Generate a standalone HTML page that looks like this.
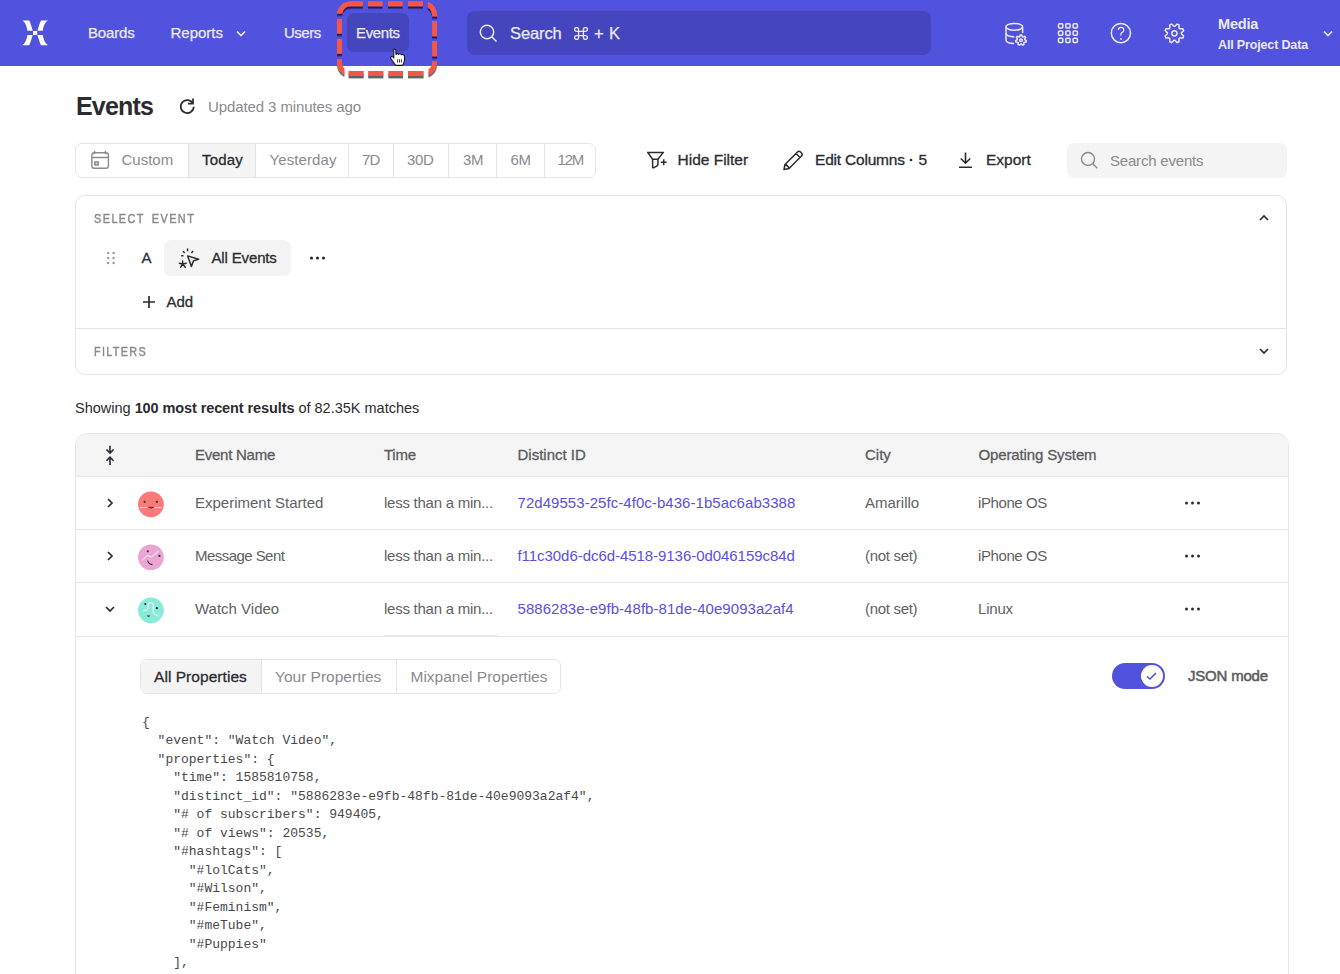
<!DOCTYPE html>
<html><head><meta charset="utf-8">
<style>
*{box-sizing:border-box;margin:0;padding:0}
html,body{width:1340px;height:974px;overflow:hidden;background:#fff;font-family:"Liberation Sans",sans-serif;color:#2B2B30}
.a{position:absolute;white-space:nowrap}
.ico{position:absolute}
.m{-webkit-text-stroke:0.3px currentColor}
#hdr{position:absolute;left:0;top:0;width:1340px;height:66px;background:#5152DE}
.nav{color:#ECEAF8;font-size:15px;line-height:18px;top:24px;-webkit-text-stroke:0.25px #ECEAF8}
.dr{top:151px;font-size:15px;line-height:17px;color:#8A8A8F}
.act{top:151px;font-size:15.5px;line-height:17px;color:#2B2B30}
.lbl{font-size:12.5px;line-height:14px;letter-spacing:1.5px;color:#8A8A8F;-webkit-text-stroke:0.45px #8A8A8F;transform:scaleX(0.87);transform-origin:0 0}
.th{top:446px;font-size:15px;line-height:17px;color:#5B5B60}
.td{font-size:15px;line-height:17px;color:#5F5F64}
.lk{color:#5A4FE0}
.tab{top:667.5px;font-size:15.5px;line-height:17px;color:#8A8A8F}
.json{white-space:pre;font-family:"Liberation Mono",monospace;font-size:13px;line-height:18.5px;color:#48484D}
</style></head><body>
<div id="hdr">
  <svg class="ico" style="left:18px;top:16px" width="34" height="34" viewBox="0 0 34 34" fill="#fff">
    <g id="petal"><path d="M4.2 4.6 H11.2 C12.6 7.5 13.8 11.5 14.7 14.7 H9.4 C8.8 11 7.6 6.4 4.2 4.6 Z"/></g>
    <use href="#petal" transform="matrix(-1 0 0 1 34.2 0)"/>
    <use href="#petal" transform="matrix(1 0 0 -1 0 33.8)"/>
    <use href="#petal" transform="matrix(-1 0 0 -1 34.2 33.8)"/>
    <rect x="15" y="14.9" width="4.2" height="4"/>
  </svg>
  <div class="a nav" style="left:88px;letter-spacing:-0.15px">Boards</div>
  <div class="a nav" style="left:170.5px">Reports</div>
  <svg class="ico" style="left:235px;top:29px" width="12" height="9" viewBox="0 0 12 9"><path d="M2 2.5 L6 6.5 L10 2.5" fill="none" stroke="#ECEAF8" stroke-width="1.6"/></svg>
  <div class="a nav" style="left:284px;letter-spacing:-0.5px">Users</div>
  <div class="ico" style="left:347px;top:13px;width:62px;height:39px;background:#4546BD;border-radius:7px"></div>
  <div class="a nav" style="left:356px;letter-spacing:-0.35px">Events</div>
  <!-- search -->
  <div class="ico" style="left:467px;top:11px;width:464px;height:44px;background:#4546BD;border-radius:8px"></div>
  <svg class="ico" style="left:477px;top:22px" width="24" height="24" viewBox="0 0 24 24"><circle cx="10" cy="10" r="6.7" fill="none" stroke="#ECEAF8" stroke-width="1.5"/><path d="M14.8 14.8 L19.5 19.5" stroke="#ECEAF8" stroke-width="1.6"/></svg>
  <div class="a nav" style="left:510px;top:24px;font-size:16.5px;line-height:19px;letter-spacing:-0.1px">Search</div>
  <svg class="ico" style="left:573.5px;top:27px" width="14" height="13" viewBox="0 0 14 14" preserveAspectRatio="none"><path d="M4.6 4.6 V2.6 A2 2 0 1 0 2.6 4.6 H11.4 A2 2 0 1 0 9.4 2.6 V11.4 A2 2 0 1 0 11.4 9.4 H2.6 A2 2 0 1 0 4.6 11.4 Z" fill="none" stroke="#ECEAF8" stroke-width="1.35"/></svg>
  <div class="a nav" style="left:594px;top:24px;font-size:16.5px;line-height:19px">+</div>
  <div class="a nav" style="left:609px;top:24px;font-size:16.5px;line-height:19px">K</div>
  <!-- right icons -->
  <svg class="ico" style="left:0;top:0" width="1340" height="66" viewBox="0 0 1340 66" fill="none" stroke="#ECEAF8" stroke-width="1.5">
    <ellipse cx="1014.3" cy="26.8" rx="8.3" ry="3.4"/>
    <path d="M1006 26.8 V40 Q1006 43.3 1014 43.6"/>
    <path d="M1022.6 26.8 V33"/>
    <path d="M1006 33.6 Q1007 36.6 1014.3 37"/>
    <path d="M1019.60 36.67 L1020.34 34.94 L1021.66 34.94 L1022.40 36.67 L1022.89 36.90 L1024.70 36.40 L1025.53 37.44 L1024.63 39.09 L1024.76 39.62 L1026.27 40.72 L1025.98 42.02 L1024.13 42.35 L1023.79 42.78 L1023.88 44.65 L1022.68 45.23 L1021.27 43.99 L1020.73 43.99 L1019.32 45.23 L1018.12 44.65 L1018.21 42.78 L1017.87 42.35 L1016.02 42.02 L1015.73 40.72 L1017.24 39.62 L1017.37 39.09 L1016.47 37.44 L1017.30 36.40 L1019.11 36.90 Z" fill="#5152DE"/>
    <circle cx="1021" cy="40.2" r="1.3"/>
    <rect x="1058.5" y="23.7" width="4.3" height="4.3" rx="1"/><rect x="1065.8" y="23.7" width="4.3" height="4.3" rx="1"/><rect x="1073.1" y="23.7" width="4.3" height="4.3" rx="1"/>
    <rect x="1058.5" y="31" width="4.3" height="4.3" rx="1"/><rect x="1065.8" y="31" width="4.3" height="4.3" rx="1"/><rect x="1073.1" y="31" width="4.3" height="4.3" rx="1"/>
    <rect x="1058.5" y="38.3" width="4.3" height="4.3" rx="1"/><rect x="1065.8" y="38.3" width="4.3" height="4.3" rx="1"/><rect x="1073.1" y="38.3" width="4.3" height="4.3" rx="1"/>
    <circle cx="1120.9" cy="33.1" r="9.6"/>
    <path d="M1118.3 30 Q1118.3 27.3 1121 27.3 Q1123.8 27.3 1123.8 30 Q1123.8 31.8 1121.8 32.6 Q1120.9 33 1120.9 34.5 V35.5" stroke-width="1.2"/>
    <path d="M1181.39 33.74 L1183.62 35.98 L1182.81 37.92 L1179.65 37.93 L1179.03 38.55 L1179.02 41.71 L1177.08 42.52 L1174.84 40.29 L1173.96 40.29 L1171.72 42.52 L1169.78 41.71 L1169.77 38.55 L1169.15 37.93 L1165.99 37.92 L1165.18 35.98 L1167.41 33.74 L1167.41 32.86 L1165.18 30.62 L1165.99 28.68 L1169.15 28.67 L1169.77 28.05 L1169.78 24.89 L1171.72 24.08 L1173.96 26.31 L1174.84 26.31 L1177.08 24.08 L1179.02 24.89 L1179.03 28.05 L1179.65 28.67 L1182.81 28.68 L1183.62 30.62 L1181.39 32.86 Z"/>
    <circle cx="1174.4" cy="33.3" r="2.6"/>
  </svg>
  <svg class="ico" style="left:1120px;top:37.5px" width="2" height="2"><circle cx="1" cy="1" r="0.9" fill="#ECEAF8"/></svg>
  <div class="a m" style="left:1218px;top:16px;color:#ECEAF8;font-size:14.5px;line-height:17px;font-weight:bold;letter-spacing:-0.2px;-webkit-text-stroke:0">Media</div>
  <div class="a" style="left:1218px;top:37.5px;color:#ECEAF8;font-size:12.5px;line-height:15px;font-weight:bold;letter-spacing:-0.15px">All Project Data</div>
  <svg class="ico" style="left:1322px;top:29px" width="12" height="9" viewBox="0 0 12 9"><path d="M2 2.5 L6 6.5 L10 2.5" fill="none" stroke="#ECEAF8" stroke-width="1.6"/></svg>
</div>

<!-- page title -->
<div class="a" style="left:76px;top:92px;font-size:25px;line-height:29px;font-weight:bold;color:#2B2B30;letter-spacing:-0.8px">Events</div>
<svg class="ico" style="left:177px;top:97px" width="20" height="20" viewBox="0 0 20 20" fill="none" stroke="#2B2B30" stroke-width="1.7"><path d="M16.75 9.8 A6.5 6.5 0 1 1 16 6.5"/><path d="M16 1.6 V6.6 H11"/></svg>
<div class="a" style="left:208px;top:98px;font-size:15px;line-height:17px;color:#8A8A8F;letter-spacing:-0.1px">Updated 3 minutes ago</div>

<!-- date range -->
<div class="ico" style="left:75px;top:143px;width:521px;height:35px;border:1px solid #E5E5E5;border-radius:7px"></div>
<div class="ico" style="left:188px;top:144px;width:68px;height:33px;background:#F4F4F4;border-left:1px solid #E5E5E5;border-right:1px solid #E5E5E5"></div>
<div class="ico" style="left:348px;top:144px;width:1px;height:33px;background:#E5E5E5"></div>
<div class="ico" style="left:393px;top:144px;width:1px;height:33px;background:#E5E5E5"></div>
<div class="ico" style="left:448px;top:144px;width:1px;height:33px;background:#E5E5E5"></div>
<div class="ico" style="left:496px;top:144px;width:1px;height:33px;background:#E5E5E5"></div>
<div class="ico" style="left:544px;top:144px;width:1px;height:33px;background:#E5E5E5"></div>
<svg class="ico" style="left:89px;top:150px" width="21" height="21" viewBox="0 0 21 21" fill="none" stroke="#8A8A8F" stroke-width="1.4">
  <rect x="2.9" y="2.8" width="16.5" height="15.4" rx="2.2"/><path d="M2.9 7.5 H19.4 M5.6 0.8 V4.3 M16.4 0.8 V4.3"/><rect x="6" y="12" width="3.1" height="2.9" stroke-width="1.6"/>
</svg>
<div class="a dr" style="left:121.5px">Custom</div>
<div class="a dr m" style="left:202px;font-size:15px;color:#2B2B30;letter-spacing:0.2px">Today</div>
<div class="a dr" style="left:269.5px;letter-spacing:0.1px">Yesterday</div>
<div class="a dr" style="left:362px;letter-spacing:-0.8px">7D</div>
<div class="a dr" style="left:407px;letter-spacing:-0.3px">30D</div>
<div class="a dr" style="left:463px;letter-spacing:-0.3px">3M</div>
<div class="a dr" style="left:510.5px;letter-spacing:-0.3px">6M</div>
<div class="a dr" style="left:557.5px;letter-spacing:-1.2px">12M</div>

<!-- actions -->
<svg class="ico" style="left:645px;top:150px" width="24" height="20" viewBox="0 0 24 20" fill="none" stroke="#2B2B30" stroke-width="1.5" stroke-linejoin="round">
  <path d="M2.7 2.4 H18.4 L12.9 9.2 H7.6 Z"/><path d="M7.6 9.2 V17.2 Q7.9 18.2 9 17.6 L11.6 16.2 Q12.9 15.6 12.9 14.6 V9.2"/><path d="M18.7 9.3 V15.2 M15.8 12.25 H21.6"/>
</svg>
<div class="a act m" style="left:677.5px">Hide Filter</div>
<svg class="ico" style="left:781px;top:149px" width="24" height="22" viewBox="0 0 24 22" fill="none" stroke="#2B2B30" stroke-width="1.5" stroke-linejoin="round">
  <path d="M3 20.5 L4 15.5 L16.5 3 Q18 1.5 19.5 3 L20.5 4 Q22 5.5 20.5 7 L8 19.5 Z M15 4.5 L19 8.5 M4.3 14.9 L8.1 18.7"/>
</svg>
<div class="a act m" style="left:815px;letter-spacing:-0.2px">Edit Columns</div><svg class="ico" style="left:909px;top:158px" width="4" height="4"><circle cx="2" cy="2" r="1.35" fill="#2B2B30"/></svg><div class="a act m" style="left:918.5px">5</div>
<svg class="ico" style="left:956px;top:150px" width="20" height="20" viewBox="0 0 20 20" fill="none" stroke="#2B2B30" stroke-width="1.6">
  <path d="M9.5 2.5 V13 M4.8 8.5 L9.5 13.2 L14.2 8.5 M3 17.3 H16"/>
</svg>
<div class="a act m" style="left:986px">Export</div>

<!-- search events -->
<div class="ico" style="left:1067px;top:143px;width:220px;height:35px;background:#F4F4F4;border-radius:7px"></div>
<svg class="ico" style="left:1079px;top:150px" width="22" height="22" viewBox="0 0 22 22" fill="none" stroke="#8A8A8F" stroke-width="1.4"><circle cx="9" cy="9" r="6.5"/><path d="M13.8 13.8 L18.3 18.3"/></svg>
<div class="a" style="left:1110px;top:152px;font-size:15px;line-height:17px;color:#8A8A8F;letter-spacing:-0.2px">Search events</div>

<!-- select event card -->
<div class="ico" style="left:75px;top:195px;width:1212px;height:180px;border:1px solid #E5E5E5;border-radius:10px"></div>
<div class="ico" style="left:76px;top:328px;width:1210px;height:1px;background:#E5E5E5"></div>
<div class="a lbl" style="left:94px;top:212px;word-spacing:3px;letter-spacing:1.65px">SELECT EVENT</div>
<svg class="ico" style="left:1258px;top:213px" width="12" height="9" viewBox="0 0 12 9"><path d="M2 7 L6 3 L10 7" fill="none" stroke="#2B2B30" stroke-width="1.7"/></svg>
<svg class="ico" style="left:106px;top:251px" width="10" height="14" viewBox="0 0 10 14" fill="#9C9CA0">
  <circle cx="2.2" cy="2" r="1.25"/><circle cx="7.6" cy="2" r="1.25"/><circle cx="2.2" cy="7" r="1.25"/><circle cx="7.6" cy="7" r="1.25"/><circle cx="2.2" cy="12" r="1.25"/><circle cx="7.6" cy="12" r="1.25"/>
</svg>
<div class="a m" style="left:141.5px;top:249px;font-size:15px;line-height:17px;color:#2B2B30">A</div>
<div class="ico" style="left:164px;top:240px;width:127px;height:36px;background:#F4F4F4;border-radius:7px"></div>
<svg class="ico" style="left:177px;top:246px" width="24" height="24" viewBox="0 0 24 24" fill="none" stroke="#2B2B30" stroke-width="1.5" stroke-linejoin="round">
  <path d="M10.7 9.9 L21.6 13.3 L16.4 14.9 L14.4 20.4 Z"/><path d="M10.55 2.6 V5.2 M5.9 5.3 L7.8 6.9 M16.1 4.9 L14.4 6.9 M4.2 9.8 H6.5"/>
  <path d="M5.6 15 V17.9 M2.4 17.3 L5.6 17.9 L9.2 17.2 M3.7 21.2 L5.6 17.9 L8.3 21.2" stroke-width="1.5" stroke-linecap="round"/>
</svg>
<div class="a m" style="left:211.5px;top:249px;font-size:15px;line-height:17px;color:#2B2B30;letter-spacing:-0.15px">All Events</div>
<svg class="ico" style="left:309px;top:255px" width="17" height="6" viewBox="0 0 17 6" fill="#2B2B30"><circle cx="2.5" cy="3" r="1.6"/><circle cx="8.5" cy="3" r="1.6"/><circle cx="14.5" cy="3" r="1.6"/></svg>
<svg class="ico" style="left:142px;top:295px" width="14" height="14" viewBox="0 0 14 14"><path d="M7 1 V13 M1 7 H13" stroke="#2B2B30" stroke-width="1.7"/></svg>
<div class="a m" style="left:166.5px;top:293px;font-size:15px;line-height:17px;color:#2B2B30">Add</div>
<div class="a lbl" style="left:94px;top:344.5px">FILTERS</div>
<svg class="ico" style="left:1258px;top:347px" width="12" height="9" viewBox="0 0 12 9"><path d="M2 2 L6 6 L10 2" fill="none" stroke="#2B2B30" stroke-width="1.7"/></svg>

<!-- showing -->
<div class="a" style="left:75px;top:400px;font-size:14.5px;line-height:16px;color:#2B2B30">Showing <b style="letter-spacing:-0.1px">100 most recent results</b> of 82.35K matches</div>

<!-- table -->
<div class="ico" style="left:75px;top:433px;width:1214px;height:600px;border:1px solid #E7E7E7;border-radius:12px;overflow:hidden">
  <div class="ico" style="left:0;top:0;width:1212px;height:42px;background:#F5F5F5"></div>
  <div class="ico" style="left:0;top:42px;width:1212px;height:1px;background:#E7E7E7"></div>
  <div class="ico" style="left:0;top:95px;width:1212px;height:1px;background:#E7E7E7"></div>
  <div class="ico" style="left:0;top:148px;width:1212px;height:1px;background:#E7E7E7"></div>
  <div class="ico" style="left:0;top:202px;width:1212px;height:1px;background:#E7E7E7"></div>
</div>
<svg class="ico" style="left:104px;top:444px" width="12" height="22" viewBox="0 0 12 22" fill="none" stroke="#2B2B30" stroke-width="1.6">
  <path d="M6 1.8 V9 M2.5 5.5 L6 9 L9.5 5.5 M6 21 V13.2 M2.5 16.7 L6 13.2 L9.5 16.7"/>
</svg>
<div class="a th m" style="left:195px;letter-spacing:-0.25px">Event Name</div>
<div class="a th m" style="left:384px;letter-spacing:-0.25px">Time</div>
<div class="a th m" style="left:517.5px">Distinct ID</div>
<div class="a th m" style="left:865px">City</div>
<div class="a th m" style="left:978.5px;letter-spacing:-0.13px">Operating System</div>

<svg class="ico" style="left:104px;top:497px" width="12" height="12" viewBox="0 0 12 12"><path d="M4 2 L8 6 L4 10" fill="none" stroke="#2B2B30" stroke-width="1.7"/></svg>
<svg class="ico" style="left:104px;top:550px" width="12" height="12" viewBox="0 0 12 12"><path d="M4 2 L8 6 L4 10" fill="none" stroke="#2B2B30" stroke-width="1.7"/></svg>
<svg class="ico" style="left:104px;top:603px" width="12" height="12" viewBox="0 0 12 12"><path d="M2 4 L6 8 L10 4" fill="none" stroke="#2B2B30" stroke-width="1.7"/></svg>

<svg class="ico" style="left:137px;top:490px" width="28" height="28" viewBox="0 0 28 28">
  <circle cx="13.9" cy="14.3" r="12.9" fill="#FA7A7A"/>
  <circle cx="7.6" cy="11.8" r="1.15" fill="#2A3A3A"/><circle cx="19.9" cy="11.8" r="1.15" fill="#2A3A3A"/>
  <path d="M11.6 17.3 H16.6 Q14.1 19.2 11.6 17.3 Z" fill="#2A3A3A" stroke="#2A3A3A" stroke-width="0.6"/>
  <path d="M3.1 17.6 H9.9 M17.9 17.6 H24.9" stroke="#fff" stroke-width="1" stroke-dasharray="1.6 0.5"/>
</svg>
<svg class="ico" style="left:137px;top:543px" width="28" height="28" viewBox="0 0 28 28">
  <circle cx="13.9" cy="14.3" r="12.9" fill="#EBA5D3"/>
  <circle cx="10.8" cy="8.3" r="1.1" fill="#2A3A3A"/><circle cx="22.4" cy="12.9" r="1.1" fill="#2A3A3A"/>
  <path d="M5.4 17.2 L10.3 12.4 L14.5 14.1 L21.4 8.2" fill="none" stroke="#fff" stroke-width="1"/>
  <path d="M10.6 17.6 Q11.5 21 15.5 21.6" fill="none" stroke="#2A3A3A" stroke-width="1.1"/>
</svg>
<svg class="ico" style="left:137px;top:596px" width="28" height="28" viewBox="0 0 28 28">
  <circle cx="13.9" cy="14.3" r="12.9" fill="#8AEBD9"/>
  <circle cx="8.3" cy="8" r="1.1" fill="#2A2A2A"/><circle cx="19.9" cy="12.2" r="1.1" fill="#2A2A2A"/>
  <path d="M6.25 14.45 H9.2 Q10.6 14 11.3 11.7 V8 Q11.6 6.6 13.75 6.6 Q16.2 6.6 16.2 8 V16.5 Q17 19.2 21.4 20" fill="none" stroke="#fff" stroke-width="1"/>
  <path d="M9.6 19.4 H13.4 Q11.5 22.2 9.6 19.4 Z" fill="#2A2A2A"/>
</svg>

<div class="a td" style="left:195px;top:494px">Experiment Started</div>
<div class="a td" style="left:384px;top:494px;letter-spacing:-0.25px">less than a min...</div>
<div class="a td lk" style="left:517.5px;top:494px;letter-spacing:0.05px">72d49553-25fc-4f0c-b436-1b5ac6ab3388</div>
<div class="a td" style="left:865px;top:494px">Amarillo</div>
<div class="a td" style="left:978px;top:494px;letter-spacing:-0.4px">iPhone OS</div>
<svg class="ico" style="left:1184px;top:500px" width="17" height="6" viewBox="0 0 17 6" fill="#2B2B30"><circle cx="2.5" cy="3" r="1.5"/><circle cx="8.5" cy="3" r="1.5"/><circle cx="14.5" cy="3" r="1.5"/></svg>

<div class="a td" style="left:195px;top:547px;letter-spacing:-0.55px">Message Sent</div>
<div class="a td" style="left:384px;top:547px;letter-spacing:-0.25px">less than a min...</div>
<div class="a td lk" style="left:517.5px;top:547px;letter-spacing:-0.05px">f11c30d6-dc6d-4518-9136-0d046159c84d</div>
<div class="a td" style="left:865px;top:547px;letter-spacing:-0.3px">(not set)</div>
<div class="a td" style="left:978px;top:547px;letter-spacing:-0.4px">iPhone OS</div>
<svg class="ico" style="left:1184px;top:553px" width="17" height="6" viewBox="0 0 17 6" fill="#2B2B30"><circle cx="2.5" cy="3" r="1.5"/><circle cx="8.5" cy="3" r="1.5"/><circle cx="14.5" cy="3" r="1.5"/></svg>

<div class="a td" style="left:195px;top:600px">Watch Video</div>
<div class="a td" style="left:384px;top:600px;letter-spacing:-0.25px">less than a min...</div>
<div class="a td lk" style="left:517.5px;top:600px;letter-spacing:0.05px">5886283e-e9fb-48fb-81de-40e9093a2af4</div>
<div class="a td" style="left:865px;top:600px;letter-spacing:-0.3px">(not set)</div>
<div class="a td" style="left:978px;top:600px;letter-spacing:-0.2px">Linux</div>
<svg class="ico" style="left:1184px;top:606px" width="17" height="6" viewBox="0 0 17 6" fill="#2B2B30"><circle cx="2.5" cy="3" r="1.5"/><circle cx="8.5" cy="3" r="1.5"/><circle cx="14.5" cy="3" r="1.5"/></svg>
<div class="ico" style="left:384px;top:634.5px;width:114px;height:1.5px;background:#E9E9E9"></div>

<!-- expanded -->
<div class="ico" style="left:140px;top:659px;width:421px;height:35px;border:1px solid #E5E5E5;border-radius:7px;overflow:hidden">
  <div class="ico" style="left:0;top:0;width:121px;height:33px;background:#F4F4F4;border-right:1px solid #E5E5E5"></div>
  <div class="ico" style="left:255px;top:0;width:1px;height:33px;background:#E5E5E5"></div>
</div>
<div class="a tab m" style="left:154px;color:#2B2B30;font-size:15.5px;letter-spacing:0.05px">All Properties</div>
<div class="a tab" style="left:275px">Your Properties</div>
<div class="a tab" style="left:410.5px">Mixpanel Properties</div>

<div class="ico" style="left:1112px;top:663px;width:53px;height:26px;background:#5152DE;border-radius:13px"></div>
<div class="ico" style="left:1140.5px;top:665px;width:22px;height:22px;background:#fff;border-radius:50%"></div>
<svg class="ico" style="left:1145px;top:669.5px" width="13" height="12" viewBox="0 0 13 12"><path d="M2 6.5 L5 9 L11 3" fill="none" stroke="#5152DE" stroke-width="1.6"/></svg>
<div class="a m" style="left:1188px;top:667px;font-size:15px;line-height:17px;color:#5B5B60;letter-spacing:-0.2px;-webkit-text-stroke:0.5px #5B5B60">JSON mode</div>

<pre class="a json" style="left:142px;top:713.5px">{
  "event": "Watch Video",
  "properties": {
    "time": 1585810758,
    "distinct_id": "5886283e-e9fb-48fb-81de-40e9093a2af4",
    "# of subscribers": 949405,
    "# of views": 20535,
    "#hashtags": [
      "#lolCats",
      "#Wilson",
      "#Feminism",
      "#meTube",
      "#Puppies"
    ],
</pre>

<!-- highlight box -->
<svg class="ico" style="left:0;top:0" width="460" height="90" viewBox="0 0 460 90">
  <defs><mask id="dm" maskUnits="userSpaceOnUse" x="0" y="0" width="460" height="90"><rect x="0" y="0" width="460" height="90" fill="#fff"/><g fill="#000"><rect x="362.9" y="-5" width="5.1" height="14"/><rect x="382.6" y="-5" width="5.4" height="14"/><rect x="402.7" y="-5" width="5.3" height="14"/><rect x="423" y="-5" width="4.7" height="14"/><rect x="423.6" y="66" width="4.9" height="14"/><rect x="403" y="66" width="5.0" height="14"/><rect x="383.4" y="66" width="4.9" height="14"/><rect x="363.7" y="66" width="4.5" height="14"/><rect x="344.4" y="66" width="4.1" height="14"/><rect x="428" y="16.4" width="14" height="4.6"/><rect x="428" y="36.2" width="14" height="4.8"/><rect x="428" y="56.3" width="14" height="4.9"/><rect x="332" y="13.6" width="14" height="5.3"/><rect x="332" y="33.7" width="14" height="5.3"/><rect x="332" y="53.8" width="14" height="5.4"/></g></mask>
  <filter id="sh" x="-10%" y="-10%" width="120%" height="130%"><feDropShadow dx="0" dy="2.4" stdDeviation="0.5" flood-color="#000" flood-opacity="0.62"/></filter></defs>
  <g filter="url(#sh)"><rect x="339.5" y="3.7" width="95.1" height="69.8" rx="11" fill="none" stroke="#F4574A" stroke-width="5" mask="url(#dm)"/></g>
</svg>
<!-- cursor -->
<svg class="ico" style="left:384px;top:44px" width="28" height="26" viewBox="0 0 28 26">
  <path d="M10.5 5.1 Q11.9 5.1 11.9 6.5 V10.3 Q12.9 9.3 14.1 9.8 L14.6 10.3 Q15.7 9.4 16.8 10.1 L17.3 10.7 Q18.5 10 19.6 10.7 Q20.5 11.3 20.5 12.5 V16.3 Q20.3 18.3 19.2 20 L18.6 21.4 H11.6 Q9 17.5 6.9 14.5 Q6.4 13.4 7.3 12.6 Q8.3 12.2 9 13 L9.8 14 V6.5 Q9.6 5.1 10.5 5.1 Z" fill="#fff" stroke="#151515" stroke-width="1.1" stroke-linejoin="round"/>
  <path d="M13.6 15.3 V18.5 M15.5 15.3 V18.5 M17.4 15.3 V18.5" stroke="#222" stroke-width="0.9"/>
</svg>
</body></html>
